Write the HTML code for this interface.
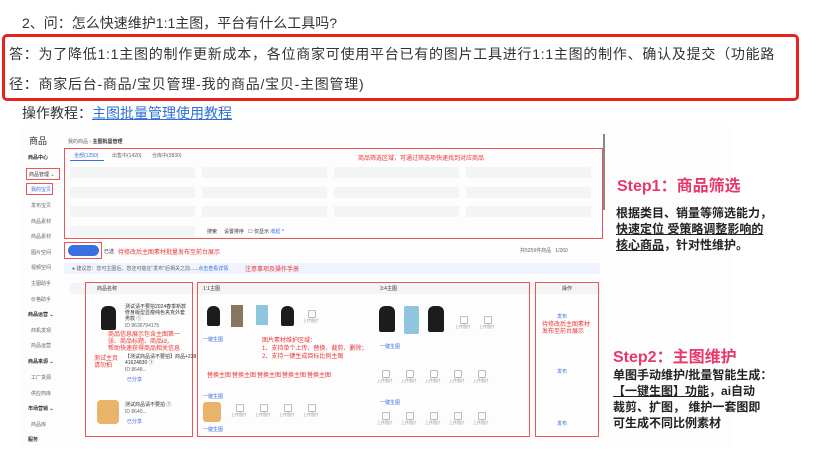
<!DOCTYPE html>
<html><head><meta charset="utf-8"><style>
*{margin:0;padding:0;box-sizing:border-box}
body{width:817px;height:457px;background:#fff;position:relative;overflow:hidden;font-family:"Liberation Sans","Noto Sans CJK SC",sans-serif;color:#333}
.a{position:absolute;white-space:nowrap}
.t{font-size:14px}
.s{font-size:5px;color:#666}
.r{color:#e33;font-size:6px}
.rb{position:absolute;border:1.5px solid #e55}
.f{position:absolute;background:#f3f4f6;height:11px}
.blk{position:absolute;background:#1c1c1c;border-radius:6px 6px 2px 2px}
.up{position:absolute;width:16px;height:14px;font-size:4px;color:#999;text-align:center;padding-top:8px}
.up:before{content:"";position:absolute;left:5px;top:0;width:6px;height:6px;border:1px solid #bbb;border-radius:1px}
.lk{position:absolute;font-size:5px;color:#3a6fe0}
.st{font-size:16px;font-weight:bold;color:#e8386b}
.bd{font-size:12px;font-weight:bold;color:#222;line-height:16px}
</style></head><body>
<div class="a t" style="left:22px;top:13px">2、问：怎么快速维护1:1主图，平台有什么工具吗?</div>
<div style="position:absolute;left:2px;top:34px;width:797px;height:67px;border:3px solid #e8231d;border-radius:5px"></div>
<div class="a t" style="left:9px;top:44px;letter-spacing:0.75px">答：为了降低1:1主图的制作更新成本，各位商家可使用平台已有的图片工具进行1:1主图的制作、确认及提交（功能路</div>
<div class="a t" style="left:9px;top:74px;letter-spacing:0.75px">径：商家后台-商品/宝贝管理-我的商品/宝贝-主图管理)</div>
<div class="a t" style="left:22px;top:103px">操作教程：<span style="color:#2d6fd6;text-decoration:underline">主图批量管理使用教程</span></div>

<div style="position:absolute;left:20px;top:126px;width:712px;height:320px;background:#fdfdfd"></div>
<div class="a" style="left:29px;top:134px;font-size:9px;color:#333">商品</div>
<div class="a s" style="left:28px;top:154px;color:#333;font-weight:bold">商品中心</div>
<div class="rb" style="left:26px;top:168px;width:34px;height:12px"></div>
<div class="a s" style="left:29px;top:171px;color:#333">商品管理 ⌄</div>
<div class="rb" style="left:26px;top:183px;width:27px;height:12px"></div>
<div class="a s" style="left:31px;top:186px;color:#3a6fe0">我的宝贝</div>
<div class="a s" style="left:31px;top:202px">发布宝贝</div>
<div class="a s" style="left:31px;top:218px">商品素材</div>
<div class="a s" style="left:31px;top:233px">商品素材</div>
<div class="a s" style="left:31px;top:249px">图片空间</div>
<div class="a s" style="left:31px;top:264px">视频空间</div>
<div class="a s" style="left:31px;top:280px">主图助手</div>
<div class="a s" style="left:31px;top:296px">价格助手</div>
<div class="a s" style="left:28px;top:311px;color:#333;font-weight:bold">商品运营 ⌄</div>
<div class="a s" style="left:31px;top:327px">商机发现</div>
<div class="a s" style="left:31px;top:342px">商品运营</div>
<div class="a s" style="left:28px;top:358px;color:#333;font-weight:bold">商品来源 ⌄</div>
<div class="a s" style="left:31px;top:374px">工厂货源</div>
<div class="a s" style="left:31px;top:390px">供应商库</div>
<div class="a s" style="left:28px;top:405px;color:#333;font-weight:bold">市场营销 ⌄</div>
<div class="a s" style="left:31px;top:421px">商品库</div>
<div class="a s" style="left:28px;top:436px;color:#333;font-weight:bold">服务</div>

<div class="a s" style="left:68px;top:138px">我的商品 › <b style="color:#333">主图批量管理</b></div>
<div class="rb" style="left:64px;top:148px;width:539px;height:91px"></div>
<div class="a s" style="left:74px;top:152px;color:#3a6fe0">全部(1250)</div>
<div style="position:absolute;left:70px;top:160px;width:34px;height:1px;background:#3a6fe0"></div>
<div class="a s" style="left:112px;top:152px">出售中(1420)</div>
<div class="a s" style="left:152px;top:152px">仓库中(3830)</div>
<div class="a r" style="left:358px;top:153px">商品筛选区域，可通过筛选项快速找到对应商品</div>
<div class="f" style="left:70px;top:167px;width:125px"></div><div class="f" style="left:202px;top:167px;width:125px"></div><div class="f" style="left:334px;top:167px;width:125px"></div><div class="f" style="left:466px;top:167px;width:125px"></div>
<div class="f" style="left:70px;top:187px;width:125px"></div><div class="f" style="left:202px;top:187px;width:125px"></div><div class="f" style="left:334px;top:187px;width:125px"></div><div class="f" style="left:466px;top:187px;width:125px"></div>
<div class="f" style="left:70px;top:206px;width:125px"></div><div class="f" style="left:202px;top:206px;width:125px"></div><div class="f" style="left:334px;top:206px;width:125px"></div><div class="f" style="left:466px;top:206px;width:125px"></div>
<div class="f" style="left:70px;top:226px;width:125px"></div>
<div class="a s" style="left:207px;top:228px;color:#333">搜索 &nbsp; &nbsp; 设置排序 &nbsp; ☐ 仅显示 <span style="color:#3a6fe0">收起 ^</span></div>
<div style="position:absolute;left:603px;top:134px;width:2px;height:76px;background:#888"></div>

<div class="rb" style="left:64px;top:242px;width:38px;height:17px"></div>
<div style="position:absolute;left:68px;top:245px;width:31px;height:11px;background:#3a6fe0;border-radius:6px"></div>
<div class="a s" style="left:104px;top:248px;color:#333">已选</div>
<div class="a r" style="left:118px;top:247px">待修改后主图素材批量发布至前台展示</div>
<div class="a s" style="left:520px;top:247px">共5259件商品 &nbsp; 1/260</div>
<div style="position:absolute;left:64px;top:263px;width:536px;height:11px;background:#eef3fd"></div>
<div class="a s" style="left:72px;top:265px">● 建议您：您可主图后，您还可能在"发布"后相关之前......<span style="color:#3a6fe0">点击查看详情</span></div>
<div class="a r" style="left:245px;top:264px">注意事项及操作手册</div>

<div style="position:absolute;left:70px;top:283px;width:530px;height:11px;background:#f3f4f6"></div>
<div class="rb" style="left:85px;top:282px;width:108px;height:155px"></div>
<div class="rb" style="left:197px;top:282px;width:333px;height:155px"></div>
<div class="rb" style="left:535px;top:282px;width:64px;height:155px"></div>
<div class="a s" style="left:97px;top:285px;color:#333">商品名称</div>
<div class="a s" style="left:203px;top:285px;color:#333">1:1主图</div>
<div class="a s" style="left:380px;top:285px;color:#333">3:4主图</div>
<div class="a s" style="left:562px;top:285px;color:#333">操作</div>

<div class="blk" style="left:101px;top:306px;width:15px;height:24px"></div>
<div class="a s" style="left:125px;top:304px;line-height:6px;color:#333">测试请不要拍2024春季新款<br>修身版型显瘦纯色夹克外套<br>男款 ①</div>
<div class="a s" style="left:125px;top:323px">ID 8636794175</div>
<div class="a r" style="left:108px;top:332px;line-height:7px">商品信息展示包含主图第一<br>张、商品标题、商品id，<br>帮助快速获得商品相关信息</div>
<div class="a r" style="left:94px;top:356px;line-height:7px">测试主页<br>请勿拍</div>
<div class="a s" style="left:125px;top:354px;line-height:6px;color:#333">【测试商品请不要拍】商品+238<br>41624830 ①</div>
<div class="a s" style="left:125px;top:367px">ID 8648...</div>
<div class="lk" style="left:127px;top:376px">已分享</div>
<div class="blk" style="left:207px;top:306px;width:13px;height:20px"></div>
<div style="position:absolute;left:231px;top:305px;width:12px;height:22px;background:#8a7660"></div>
<div style="position:absolute;left:256px;top:305px;width:12px;height:20px;background:#8ec6e0"></div>
<div class="blk" style="left:281px;top:306px;width:13px;height:20px"></div>
<div class="up" style="left:303px;top:310px">上传图片</div>
<div class="lk" style="left:203px;top:336px">一键生图</div>
<div class="a r" style="left:262px;top:337px;line-height:8px">图片素材维护区域：<br>1、支持单个上传、替换、裁剪、删除；<br>2、支持一键生成目标比例主图</div>
<div class="blk" style="left:379px;top:306px;width:16px;height:26px"></div>
<div style="position:absolute;left:404px;top:306px;width:15px;height:28px;background:#8ec6e0;border-radius:2px"></div>
<div class="blk" style="left:428px;top:306px;width:16px;height:26px"></div>
<div class="up" style="left:455px;top:316px">上传图片</div><div class="up" style="left:479px;top:316px">上传图片</div>
<div class="lk" style="left:380px;top:343px">一键生图</div>
<div class="lk" style="left:557px;top:313px">发布</div>
<div class="a r" style="left:542px;top:322px;line-height:7px">待修改后主图素材<br>发布至前台展示</div>
<div class="a r" style="left:207px;top:370px">替换主图</div><div class="a r" style="left:232px;top:370px">替换主图</div><div class="a r" style="left:257px;top:370px">替换主图</div><div class="a r" style="left:282px;top:370px">替换主图</div><div class="a r" style="left:307px;top:370px">替换主图</div>
<div class="lk" style="left:203px;top:393px">一键生图</div>
<div class="up" style="left:377px;top:370px">上传图片</div><div class="up" style="left:401px;top:370px">上传图片</div><div class="up" style="left:425px;top:370px">上传图片</div><div class="up" style="left:449px;top:370px">上传图片</div><div class="up" style="left:473px;top:370px">上传图片</div>
<div class="lk" style="left:380px;top:399px">一键生图</div>
<div class="lk" style="left:557px;top:368px">发布</div>
<div style="position:absolute;left:97px;top:400px;width:22px;height:24px;background:#e9b36a;border-radius:4px"></div>
<div class="a s" style="left:125px;top:401px;color:#333">测试商品请不要拍 ①</div>
<div class="a s" style="left:125px;top:409px">ID 8640...</div>
<div class="lk" style="left:127px;top:418px">已分享</div>
<div style="position:absolute;left:203px;top:402px;width:18px;height:20px;background:#e9b36a;border-radius:3px"></div>
<div class="up" style="left:231px;top:404px">上传图片</div><div class="up" style="left:255px;top:404px">上传图片</div><div class="up" style="left:279px;top:404px">上传图片</div><div class="up" style="left:303px;top:404px">上传图片</div>
<div class="lk" style="left:203px;top:426px">一键生图</div>
<div class="up" style="left:377px;top:412px">上传图片</div><div class="up" style="left:401px;top:412px">上传图片</div><div class="up" style="left:425px;top:412px">上传图片</div><div class="up" style="left:449px;top:412px">上传图片</div><div class="up" style="left:473px;top:412px">上传图片</div>
<div class="lk" style="left:557px;top:420px">发布</div>

<div class="a st" style="left:617px;top:172px">Step1：商品筛选</div>
<div class="a bd" style="left:616px;top:205px">根据类目、销量等筛选能力，<br><u>快速定位 受策略调整影响的</u><br><u>核心商品</u>，针对性维护。</div>
<div class="a st" style="left:613px;top:343px">Step2：主图维护</div>
<div class="a bd" style="left:613px;top:367px">单图手动维护/批量智能生成：<br><u>【一键生图】功能</u>，ai自动<br>裁剪、扩图， 维护一套图即<br>可生成不同比例素材</div>
</body></html>
